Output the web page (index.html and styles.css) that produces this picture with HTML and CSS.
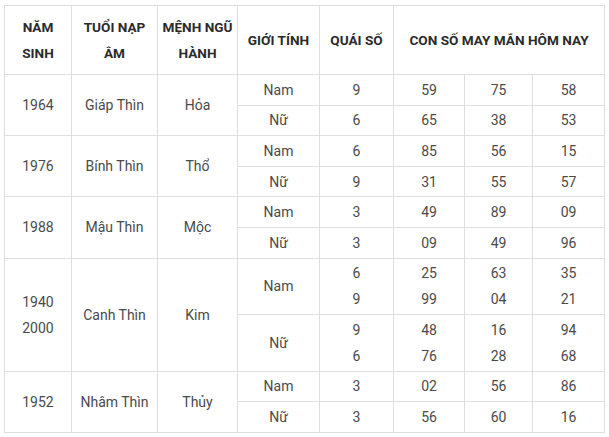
FILE: index.html
```html
<!DOCTYPE html>
<html lang="vi">
<head>
<meta charset="utf-8">
<link rel="stylesheet" href="styles.css">
</head>
<body>
<table class="lucky">
  <colgroup>
    <col class="c1"><col class="c2"><col class="c3"><col class="c4"><col class="c5"><col class="c6"><col class="c7"><col class="c8">
  </colgroup>
  <thead>
    <tr class="head">
      <th>NĂM<br>SINH</th>
      <th>TUỔI NẠP<br>ÂM</th>
      <th>MỆNH NGŨ<br>HÀNH</th>
      <th>GIỚI TÍNH</th>
      <th>QUÁI SỐ</th>
      <th colspan="3">CON SỐ MAY MẮN HÔM NAY</th>
    </tr>
  </thead>
  <tbody>
    <tr class="r1"><td rowspan="2">1964</td><td rowspan="2">Giáp Thìn</td><td rowspan="2">Hỏa</td><td>Nam</td><td>9</td><td>59</td><td>75</td><td>58</td></tr>
    <tr class="r1"><td>Nữ</td><td>6</td><td>65</td><td>38</td><td>53</td></tr>
    <tr class="r1"><td rowspan="2">1976</td><td rowspan="2">Bính Thìn</td><td rowspan="2">Thổ</td><td>Nam</td><td>6</td><td>85</td><td>56</td><td>15</td></tr>
    <tr class="r1"><td>Nữ</td><td>9</td><td>31</td><td>55</td><td>57</td></tr>
    <tr class="r1"><td rowspan="2">1988</td><td rowspan="2">Mậu Thìn</td><td rowspan="2">Mộc</td><td>Nam</td><td>3</td><td>49</td><td>89</td><td>09</td></tr>
    <tr class="r1"><td>Nữ</td><td>3</td><td>09</td><td>49</td><td>96</td></tr>
    <tr class="r2"><td rowspan="2">1940<br>2000</td><td rowspan="2">Canh Thìn</td><td rowspan="2">Kim</td><td>Nam</td><td>6<br>9</td><td>25<br>99</td><td>63<br>04</td><td>35<br>21</td></tr>
    <tr class="r2"><td>Nữ</td><td>9<br>6</td><td>48<br>76</td><td>16<br>28</td><td>94<br>68</td></tr>
    <tr class="r1"><td rowspan="2">1952</td><td rowspan="2">Nhâm Thìn</td><td rowspan="2">Thủy</td><td>Nam</td><td>3</td><td>02</td><td>56</td><td>86</td></tr>
    <tr class="r1"><td>Nữ</td><td>3</td><td>56</td><td>60</td><td>16</td></tr>
  </tbody>
</table>
</body>
</html>
```
FILE: styles.css
```css
html, body {
  margin: 0;
  padding: 0;
  background: #fff;
}
body {
  padding: 5px 4px 0 4px;
  font-family: Roboto, "Liberation Sans", Arial, sans-serif;
}
.lucky {
  border-collapse: collapse;
  table-layout: fixed;
  width: 601px;
  font-size: 14px;
  color: #4a4a4a;
}
.c1 { width: 67px; }
.c2 { width: 86px; }
.c3 { width: 80px; }
.c4 { width: 82px; }
.c5 { width: 74px; }
.c6 { width: 71px; }
.c7 { width: 68px; }
.c8 { width: 72px; }
.lucky th, .lucky td {
  border: 1px solid #dedede;
  text-align: center;
  vertical-align: middle;
  padding: 0 2px;
  line-height: 26px;
}
.lucky th {
  font-weight: bold;
  font-size: 13.6px;
  color: #2b2b2b;
  height: 68px;
}
.r1 td { height: 29.6px; }
.r2 td { height: 55.5px; }
```
